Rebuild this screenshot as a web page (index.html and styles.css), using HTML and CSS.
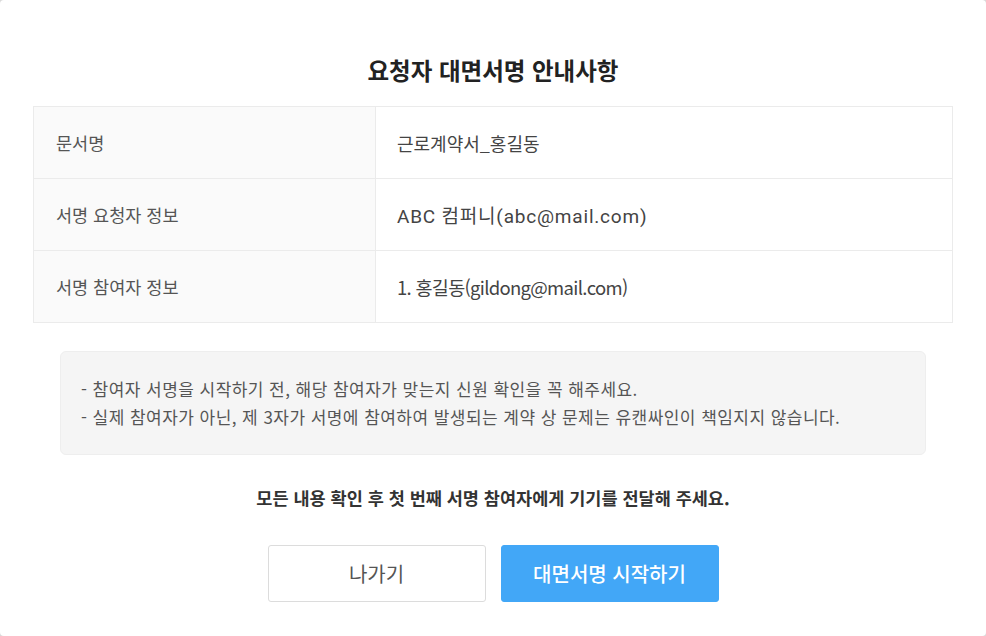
FILE: index.html
```html
<!DOCTYPE html>
<html lang="ko">
<head>
<meta charset="utf-8">
<title>요청자 대면서명 안내사항</title>
<link rel="stylesheet" href="styles.css">
</head>
<body>
<div class="modal">
  <h1 class="title">요청자 대면서명 안내사항</h1>
  <div class="info">
    <div class="label">문서명</div>
    <div class="value">근로계약서_홍길동</div>
    <div class="label">서명 요청자 정보</div>
    <div class="value value-latin">ABC 컴퍼니(abc@mail.com)</div>
    <div class="label">서명 참여자 정보</div>
    <div class="value value-tight">1. 홍길동(gildong@mail.com)</div>
  </div>
  <div class="notice">
    <p>- 참여자 서명을 시작하기 전, 해당 참여자가 맞는지 신원 확인을 꼭 해주세요.</p>
    <p>- 실제 참여자가 아닌, 제 3자가 서명에 참여하여 발생되는 계약 상 문제는 유캔싸인이 책임지지 않습니다.</p>
  </div>
  <p class="guide">모든 내용 확인 후 첫 번째 서명 참여자에게 기기를 전달해 주세요.</p>
  <div class="actions">
    <button class="btn btn-exit">나가기</button>
    <button class="btn btn-start">대면서명 시작하기</button>
  </div>
</div>
</body>
</html>
```
FILE: styles.css
```css
html, body {
  margin: 0;
  padding: 0;
  background: #d9d9d9;
}
body {
  font-family: "Noto Sans CJK KR", "Noto Sans", sans-serif;
  color: #333;
}
.modal {
  box-sizing: border-box;
  height: 636px;
  background: #fff;
  border-radius: 4px;
  padding: 55px 33px 0;
}
.title {
  margin: 0 0 21px;
  font-size: 23.5px;
  line-height: 30px;
  font-weight: 700;
  text-align: center;
  color: #222;
}
.info {
  display: grid;
  grid-template-columns: 342px 1fr;
  border: 1px solid #ebebeb;
  border-bottom: none;
}
.label, .value {
  box-sizing: border-box;
  height: 72px;
  display: flex;
  align-items: center;
  border-bottom: 1px solid #ebebeb;
}
.label {
  background: #fafafa;
  border-right: 1px solid #ebebeb;
  padding-left: 22px;
  font-size: 17.5px;
  color: #555;
}
.value {
  padding-left: 21px;
  font-size: 18px;
  color: #444;
}
.value-latin {
  font-family: "Roboto", "Noto Sans CJK KR", sans-serif;
  font-size: 19px;
  letter-spacing: 0.8px;
}
.value-tight {
  font-size: 18.5px;
  letter-spacing: -0.7px;
}
.notice {
  margin: 28px 27px 0;
  padding: 23px 20px;
  background: #f5f5f5;
  border: 1px solid #eeeeee;
  border-radius: 6px;
}
.notice p {
  margin: 0;
  font-size: 17px;
  letter-spacing: 0.45px;
  line-height: 28px;
  color: #555;
}
.guide {
  margin: 31px 0 0;
  font-size: 17.5px;
  line-height: 24px;
  font-weight: 700;
  text-align: center;
  color: #333;
}
.actions {
  margin-top: 35px;
  display: flex;
  justify-content: center;
  gap: 15px;
}
.btn {
  box-sizing: border-box;
  width: 218px;
  height: 57px;
  border-radius: 3px;
  font-family: inherit;
  font-size: 20px;
  cursor: pointer;
}
.btn-exit {
  background: #fff;
  border: 1px solid #dcdcdc;
  color: #555;
}
.btn-start {
  background: #42a7f7;
  border: 1px solid #42a7f7;
  color: #fff;
  font-weight: 500;
}
```
